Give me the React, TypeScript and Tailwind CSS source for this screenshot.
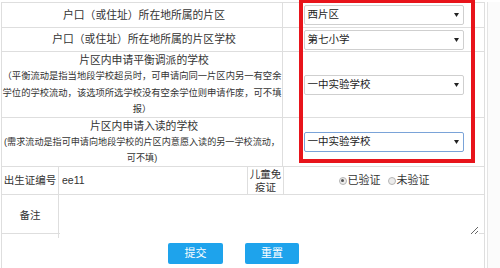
import React from "react"

function FakeSelect({ value, focused }: { value: string; focused?: boolean }) {
  return (
    <div
      className={
        focused
          ? "flex h-[20px] w-[160px] items-center justify-between rounded-[2px] border border-[#7aa3d8] bg-white pl-[3px] pr-[4px] text-[10.5px] text-[#222]"
          : "flex h-[20px] w-[160px] items-center justify-between rounded-[2px] border border-[#cfcfcf] bg-white pl-[3px] pr-[4px] text-[10.5px] text-[#222]"
      }
    >
      <span>{value}</span>
      <svg width="5" height="4" viewBox="0 0 5 4">
        <path d="M0 0h5L2.5 4z" fill="#222" />
      </svg>
    </div>
  )
}

function Radio({ checked, label }: { checked?: boolean; label: string }) {
  return (
    <span className="flex items-center">
      <span className="mr-[1px] flex h-[8px] w-[8px] items-center justify-center rounded-full border border-[#b5b5b5] bg-[#ececec]">
        {checked && <span className="h-[3px] w-[3px] rounded-full bg-[#555]" />}
      </span>
      <span>{label}</span>
    </span>
  )
}

export default function App() {
  return (
    <div className="relative flex h-[268px] w-[500px] overflow-hidden bg-white pt-[2px] font-['Liberation_Sans','Noto_Sans_CJK_SC',sans-serif] text-[#333] [text-spacing-trim:space-all]">
      <div className="ml-[1px] flex w-[484px] flex-col border-x border-t border-[#dedede]">
        {/* 片区 */}
        <div className="grid h-[25px] grid-cols-[281px_1fr] border-b border-[#dedede]">
          <div className="flex items-center justify-center border-r border-[#dedede] pl-[4px] text-[10.8px]">
            户口（或住址）所在地所属的片区
          </div>
          <div className="flex items-center justify-center">
            <FakeSelect value="西片区" />
          </div>
        </div>

        {/* 片区学校 */}
        <div className="grid h-[24px] grid-cols-[281px_1fr] border-b border-[#dedede]">
          <div className="flex items-center justify-center border-r border-[#dedede] pl-[4px] text-[10.8px]">
            户口（或住址）所在地所属的片区学校
          </div>
          <div className="flex items-center justify-center">
            <FakeSelect value="第七小学" />
          </div>
        </div>

        {/* 平衡调派 */}
        <div className="grid h-[66px] grid-cols-[281px_1fr] border-b border-[#dedede]">
          <div className="flex flex-col items-center justify-center border-r border-[#dedede] text-center leading-[16.25px]">
            <div className="pl-[4px] text-[10.8px]">片区内申请平衡调派的学校</div>
            <div className="whitespace-nowrap text-[9.3px]">（平衡流动是指当地段学校超员时，可申请向同一片区内另一有空余</div>
            <div className="whitespace-nowrap text-[9.3px]">学位的学校流动，该选项所选学校没有空余学位则申请作废，可不填</div>
            <div className="text-[9.3px]">报）</div>
          </div>
          <div className="flex items-center justify-center">
            <FakeSelect value="一中实验学校" />
          </div>
        </div>

        {/* 入读 */}
        <div className="grid h-[49px] grid-cols-[281px_1fr] border-b border-[#dedede]">
          <div className="flex flex-col items-center justify-center border-r border-[#dedede] text-center leading-[16px]">
            <div className="pl-[4px] text-[10.8px]">片区内申请入读的学校</div>
            <div className="whitespace-nowrap text-[9.1px]">(需求流动是指可申请向地段学校的片区内意愿入读的另一学校流动，</div>
            <div className="text-[9.1px]">可不填)</div>
          </div>
          <div className="flex items-center justify-center">
            <FakeSelect value="一中实验学校" focused />
          </div>
        </div>

        {/* 出生证编号 / 免疫证 */}
        <div className="grid h-[28px] grid-cols-[57px_189px_36px_1fr] border-b border-[#dedede] text-[10.5px]">
          <div className="flex items-center justify-center whitespace-nowrap border-r border-[#dedede]">出生证编号</div>
          <div className="flex items-center border-r border-[#dedede] pl-[3px]">ee11</div>
          <div className="flex flex-col items-center justify-center border-r border-[#dedede] leading-[13px]">
            <span>儿童免</span>
            <span>疫证</span>
          </div>
          <div className="flex items-center justify-center gap-[7px] text-[11px]">
            <Radio checked label="已验证" />
            <Radio label="未验证" />
          </div>
        </div>

        {/* 备注 */}
        <div className="grid h-[39px] grid-cols-[57px_1fr] border-b border-[#dedede]">
          <div className="flex items-center justify-center border-r border-[#dedede] text-[10.5px]">备注</div>
          <div className="pb-[3px] pl-[1px] pr-[5px] pt-[1px]">
            <textarea readOnly className="h-full w-full border-0 bg-white text-[10.5px] outline-none" />
          </div>
        </div>

        {/* buttons */}
        <div className="flex gap-[22px] pl-[166px] pt-[9px]">
          <button className="h-[21px] w-[55px] rounded-[2px] bg-[#1ea3ec] text-[11px] text-white">提交</button>
          <button className="h-[21px] w-[54px] rounded-[2px] bg-[#1ea3ec] text-[11px] text-white">重置</button>
        </div>
      </div>

      <div className="ml-[2px] w-px self-stretch bg-[#e4e4e4]" />
      <div className="flex-1 bg-[#fbfbfb]" />

      {/* red highlight annotation */}
      <div className="pointer-events-none absolute left-[299px] top-[-1px] h-[164px] w-[176px] border-4 border-[#e8141b]" />
    </div>
  )
}
